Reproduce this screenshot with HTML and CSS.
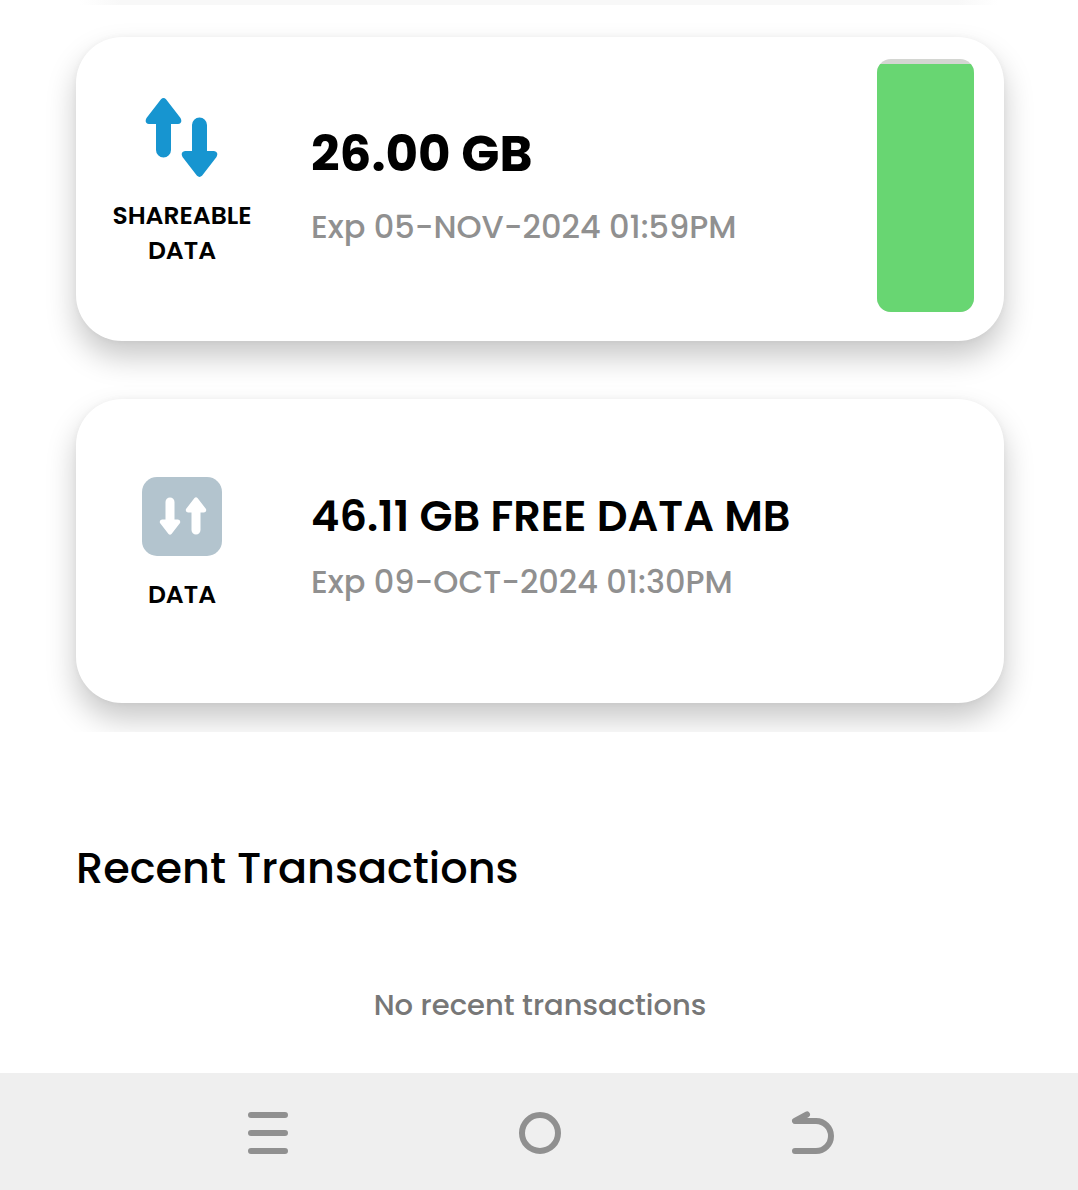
FILE: index.html
```html
<!DOCTYPE html>
<html lang="en">
<head>
<meta charset="utf-8">
<meta name="viewport" content="width=device-width, initial-scale=1">
<title>Data balance</title>
<link rel="stylesheet" href="styles.css">
</head>
<body>
<main class="page">
  <section class="balances" aria-label="Balances">
    <article class="card">
      <div class="kind">
        <svg class="kind-icon" viewBox="0 0 80 80" aria-hidden="true">
          <g fill="#1795d0">
            <path id="arrow" d="M19 1.200Q21.500-1 24 1.200L38.500 20Q41 25 36 26H29V52A7.500 7.500 0 0 1 14 52V26H7Q2 25 4.500 20Z"/>
            <use href="#arrow" transform="rotate(180 39.500 39.500)"/>
          </g>
        </svg>
        <span class="kind-name">SHAREABLE<br>DATA</span>
      </div>
      <div class="details">
        <h2 class="amount amount-large">26.00 GB</h2>
        <p class="expiry">Exp 05-NOV-2024 01:59PM</p>
      </div>
      <div class="gauge" role="meter" aria-label="Data remaining" aria-valuemin="0" aria-valuemax="100" aria-valuenow="98">
        <div class="gauge-fill" style="height: 98%"></div>
      </div>
    </article>
    <article class="card">
      <div class="kind">
        <svg class="kind-icon" viewBox="0 0 80 80" aria-hidden="true">
          <rect width="80" height="79" rx="15" fill="#b3c4ce"/>
          <g fill="#fff">
            <path id="small-arrow" d="M52.500 21Q54 19.500 55.500 21L64 32Q65 35 62 35.500H58.500V53A4.500 4.500 0 0 1 49.500 53V35.500H46Q43 35 44 32Z"/>
            <use href="#small-arrow" transform="rotate(180 41 39)"/>
          </g>
        </svg>
        <span class="kind-name">DATA</span>
      </div>
      <div class="details">
        <h2 class="amount">46.11 GB FREE DATA MB</h2>
        <p class="expiry">Exp 09-OCT-2024 01:30PM</p>
      </div>
    </article>
  </section>
  <section class="recent">
    <h2 class="recent-title">Recent Transactions</h2>
    <p class="recent-empty">No recent transactions</p>
  </section>
</main>
<nav class="system-bar" aria-label="System">
  <button class="system-button" type="button" aria-label="Recent apps">
    <svg class="system-icon" viewBox="0 0 44 44" aria-hidden="true"><path d="M5 4H39M5 22H39M5 40H39"/></svg>
  </button>
  <button class="system-button" type="button" aria-label="Home">
    <svg class="system-icon" viewBox="0 0 44 44" aria-hidden="true"><circle cx="22" cy="22" r="18"/></svg>
  </button>
  <button class="system-button" type="button" aria-label="Back">
    <svg class="system-icon" viewBox="0 0 44 44" aria-hidden="true"><path d="M17 3.500L5 10H26A15 15 0 0 1 26 40H5"/></svg>
  </button>
</nav>
</body>
</html>
```
FILE: styles.css
```css
* {
  box-sizing: border-box;
}

body {
  margin: 0;
  min-height: 100vh;
  display: flex;
  flex-direction: column;
  background: #fff;
  color: #000;
  font-family: Poppins, Inter, sans-serif;
}

h2,
p {
  margin: 0;
  font-weight: 500;
}

.page {
  flex: 1;
}

.balances {
  display: flex;
  flex-direction: column;
  gap: 58px;
  padding: 37px 74px 29px 76px;
  overflow: hidden;
  background: linear-gradient(90deg, #fff 80px, #f8f8f8 120px, #f8f8f8 calc(100% - 120px), #fff calc(100% - 80px)) top / 100% 5px no-repeat;
}

.card {
  display: flex;
  gap: 23px;
  min-height: 304px;
  padding-right: 30px;
  border-radius: 46px;
  background: #fff;
  box-shadow: 0 16px 30px rgb(0 0 0 / 22%), 0 0 6px rgb(0 0 0 / 4%);
}

.kind {
  flex: none;
  width: 212px;
  display: flex;
  flex-direction: column;
  align-items: center;
  justify-content: center;
  gap: 20px;
  padding-bottom: 13px;
}

.kind-icon {
  width: 80px;
  height: 80px;
}

.kind-name {
  font-size: 25px;
  line-height: 35px;
  font-weight: 600;
  text-align: center;
}

.details {
  flex: 1;
  display: flex;
  flex-direction: column;
  justify-content: center;
  padding-bottom: 4px;
}

.amount {
  font-size: 43px;
  line-height: 66px;
  font-weight: 600;
}

.amount-large {
  font-size: 50px;
  line-height: 80px;
  font-weight: 700;
}

.expiry {
  font-size: 32px;
  line-height: 66px;
  color: #909090;
}

.gauge {
  flex: none;
  width: 97px;
  height: 253px;
  margin-top: 22px;
  display: flex;
  align-items: flex-end;
  border-radius: 14px;
  overflow: hidden;
  background: #d4d6d2;
}

.gauge-fill {
  width: 100%;
  background: #68d672;
}

.recent {
  padding: 103px 74px 37px 76px;
}

.recent-title {
  font-size: 43px;
  line-height: 66px;
}

.recent-empty {
  margin-top: 83px;
  font-size: 29px;
  line-height: 42px;
  text-align: center;
  color: #777;
}

.system-bar {
  display: grid;
  grid-template-columns: repeat(3, 1fr);
  padding: 0 131px;
  background: #efefef;
}

.system-button {
  display: flex;
  align-items: center;
  justify-content: center;
  height: 117px;
  padding: 2px 0 0 2px;
  border: 0;
  background: none;
}

.system-icon {
  width: 44px;
  height: 44px;
  fill: none;
  stroke: #909090;
  stroke-width: 6;
  stroke-linecap: round;
  stroke-linejoin: round;
}
```
